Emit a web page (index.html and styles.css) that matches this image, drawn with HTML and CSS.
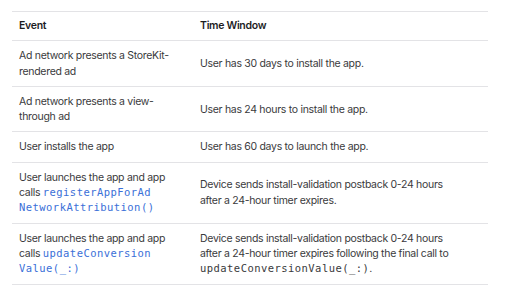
FILE: index.html
```html
<!DOCTYPE html>
<html lang="en">
<head>
<meta charset="utf-8">
<title>SKAdNetwork timing</title>
<link rel="stylesheet" href="styles.css">
</head>
<body>
<table class="tbl">
  <thead>
    <tr><th class="c1">Event</th><th class="c2">Time Window</th></tr>
  </thead>
  <tbody>
    <tr><td>Ad network presents a StoreKit-rendered ad</td><td class="mid">User has 30 days to install the app.</td></tr>
    <tr><td>Ad network presents a view-through ad</td><td class="mid">User has 24 hours to install the app.</td></tr>
    <tr><td>User installs the app</td><td>User has 60 days to launch the app.</td></tr>
    <tr><td>User launches the app and app calls <a class="code link" href="#"><span>registerAppForAd</span><wbr><span>NetworkAttribution()</span></a></td><td class="mid">Device sends install-validation postback 0-24 hours after a 24-hour timer expires.</td></tr>
    <tr><td>User launches the app and app calls <a class="code link" href="#"><span>updateConversion</span><wbr><span>Value(_:)</span></a></td><td class="mid">Device sends install-validation postback 0-24 hours after a 24-hour timer expires following the final call to <code class="code">updateConversionValue(_:)</code>.</td></tr>
  </tbody>
</table>
</body>
</html>
```
FILE: styles.css
```css
html, body {
  margin: 0;
  background: #ffffff;
}
body {
  padding: 11px 12px;
  font-family: "Inter", "Liberation Sans", sans-serif;
  font-size: 10.5px;
  line-height: 15.3px;
  letter-spacing: -0.3px;
  color: #3a3a3c;
}
.tbl {
  width: 476px;
  border-collapse: collapse;
  border-top: 1px solid #e3e3e6;
}
.tbl th, .tbl td {
  text-align: left;
  vertical-align: top;
  padding: 7px 7px 7px;
  border-bottom: 1px solid #e3e3e6;
}
.tbl th {
  font-weight: 600;
  color: #1d1d1f;
  padding-top: 6px;
}
.tbl .c1 { width: 167px; }
.tbl td.mid { vertical-align: middle; }
.tbl td:last-child { padding-right: 30px; }
.code {
  font-family: "DejaVu Sans Mono", "Liberation Mono", monospace;
  font-size: 10.5px;
  line-height: 1;
  letter-spacing: 0.45px;
}
.link {
  color: #3a6fd8;
  text-decoration: none;
}
```
